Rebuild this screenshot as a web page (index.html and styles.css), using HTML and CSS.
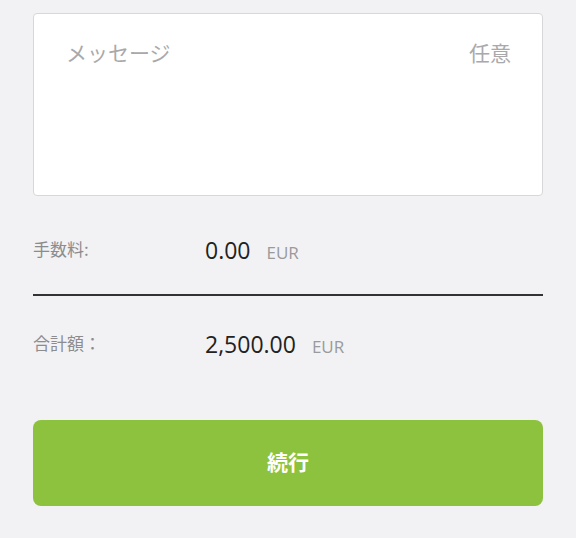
FILE: index.html
```html
<!DOCTYPE html>
<html lang="ja">
<head>
<meta charset="utf-8">
<link rel="stylesheet" href="styles.css">
</head>
<body>
<div class="page">
  <div class="message-box">
    <span class="placeholder">メッセージ</span>
    <span class="optional">任意</span>
  </div>
  <div class="row row-fee">
    <span class="label">手数料:</span>
    <span class="amount">0.00</span>
    <span class="currency">EUR</span>
  </div>
  <div class="divider"></div>
  <div class="row row-total">
    <span class="label">合計額：</span>
    <span class="amount">2,500.00</span>
    <span class="currency">EUR</span>
  </div>
  <button class="continue">続行</button>
</div>
</body>
</html>
```

FILE: styles.css
```css
html, body {
  margin: 0;
  padding: 0;
  background: #f2f2f4;
}
body {
  font-family: "Open Sans", "Noto Sans CJK JP", sans-serif;
}
.page {
  padding: 13px 33px 0 33px;
  display: flex;
  flex-direction: column;
}
.message-box {
  height: 183px;
  box-sizing: border-box;
  background: #ffffff;
  border: 1.5px solid #d7d7d9;
  border-radius: 4px;
  display: flex;
  justify-content: space-between;
  align-items: flex-start;
  padding: 23px 31px 0 32px;
  font-family: "Noto Sans CJK JP", sans-serif;
  font-size: 21px;
  line-height: 30px;
  color: #a9a9ab;
}
.row {
  display: flex;
  align-items: baseline;
  line-height: 36px;
  box-sizing: border-box;
}
.row-fee {
  height: 98px;
  padding-top: 36px;
}
.row-total {
  height: 66px;
  padding-top: 30px;
}
.label {
  width: 172px;
  flex: none;
  align-self: flex-start;
  line-height: 34px;
  font-family: "Noto Sans CJK JP", sans-serif;
  font-size: 17px;
  color: #8c8c8e;
}
.amount {
  font-family: "Open Sans", sans-serif;
  font-size: 23px;
  color: #222222;
}
.currency {
  margin-left: 16px;
  font-family: "Open Sans", sans-serif;
  font-size: 17px;
  color: #9a9a9c;
}
.divider {
  height: 2px;
  background: #333333;
}
.continue {
  margin-top: 58px;
  height: 86px;
  padding: 0 0 4px 0;
  border: none;
  border-radius: 8px;
  background: #8cc23d;
  color: #ffffff;
  font-family: "Noto Sans CJK JP", sans-serif;
  font-weight: 700;
  font-size: 21px;
  cursor: pointer;
}
```
